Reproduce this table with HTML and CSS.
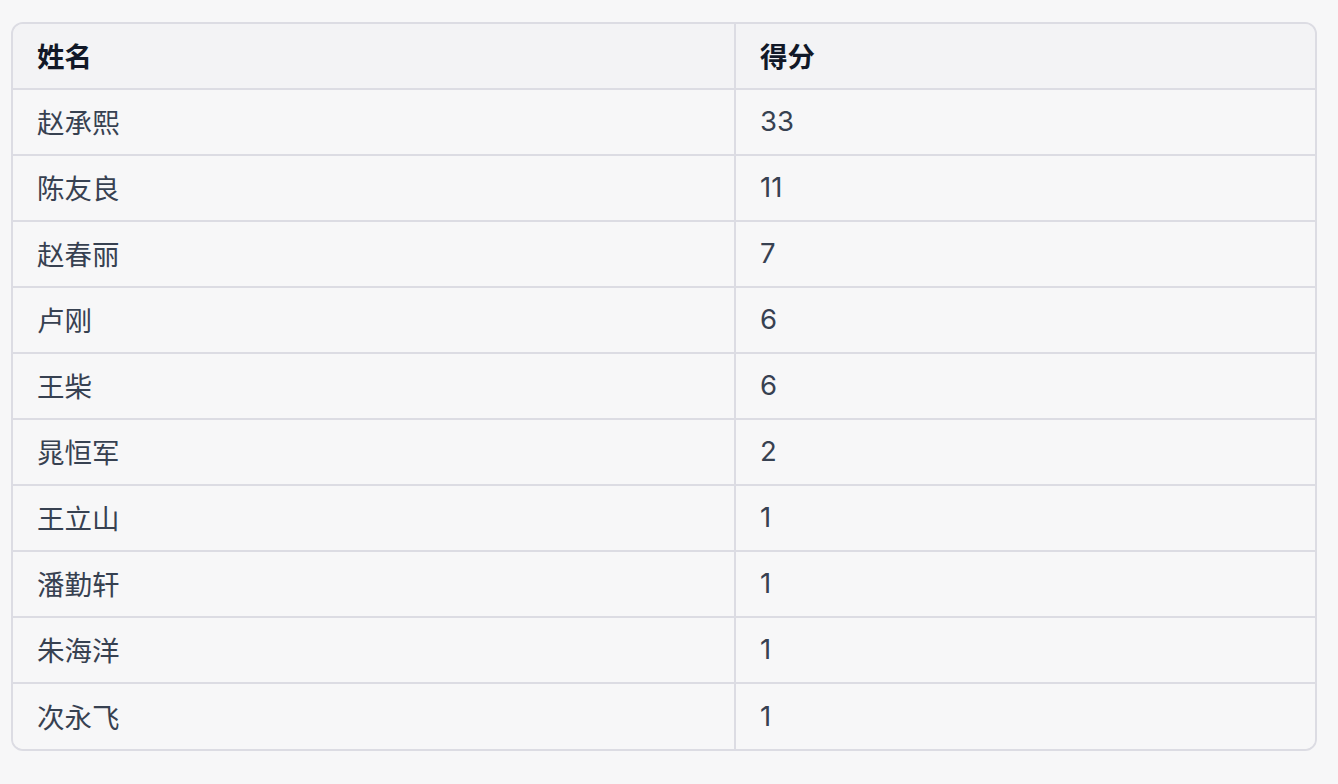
FILE: index.html
```html
<!DOCTYPE html>
<html lang="zh-CN">
<head>
  <meta charset="UTF-8">
  <meta name="viewport" content="width=device-width,initial-scale=1">
  <title>得分表</title>
  <link rel="stylesheet" href="styles.css">
</head>
<body>
  <div class="table-wrap">
    <table class="score-table">
      <thead>
        <tr><th class="col-name">姓名</th><th>得分</th></tr>
      </thead>
      <tbody>
        <tr><td>赵承熙</td><td>33</td></tr>
        <tr><td>陈友良</td><td>11</td></tr>
        <tr><td>赵春丽</td><td>7</td></tr>
        <tr><td>卢刚</td><td>6</td></tr>
        <tr><td>王柴</td><td>6</td></tr>
        <tr><td>晁恒军</td><td>2</td></tr>
        <tr><td>王立山</td><td>1</td></tr>
        <tr><td>潘勤轩</td><td>1</td></tr>
        <tr><td>朱海洋</td><td>1</td></tr>
        <tr><td>次永飞</td><td>1</td></tr>
      </tbody>
    </table>
  </div>
</body>
</html>
```
FILE: styles.css
```css
body { margin:0; padding:22px 21px 0 11px; background:#f7f7f8; font-family:Inter, "Noto Sans CJK SC", sans-serif; color:#374151; }
.table-wrap { border:2px solid #dcdce3; border-radius:12px; overflow:hidden; }
.score-table { width:100%; border-collapse:collapse; table-layout:fixed; font-size:27.5px; }
.score-table th, .score-table td { height:66px; padding:0 24px 2px; text-align:left; vertical-align:middle; box-sizing:border-box; }
.score-table th { height:65px; background:#f3f3f5; color:#111827; font-weight:700; }
.score-table td { background:#f7f7f8; }
.score-table tr + tr td, .score-table tbody tr:first-child td { border-top:2px solid #dcdce3; }
.score-table th + th, .score-table td + td { border-left:2px solid #dcdce3; }
.col-name { width:722px; }
```
